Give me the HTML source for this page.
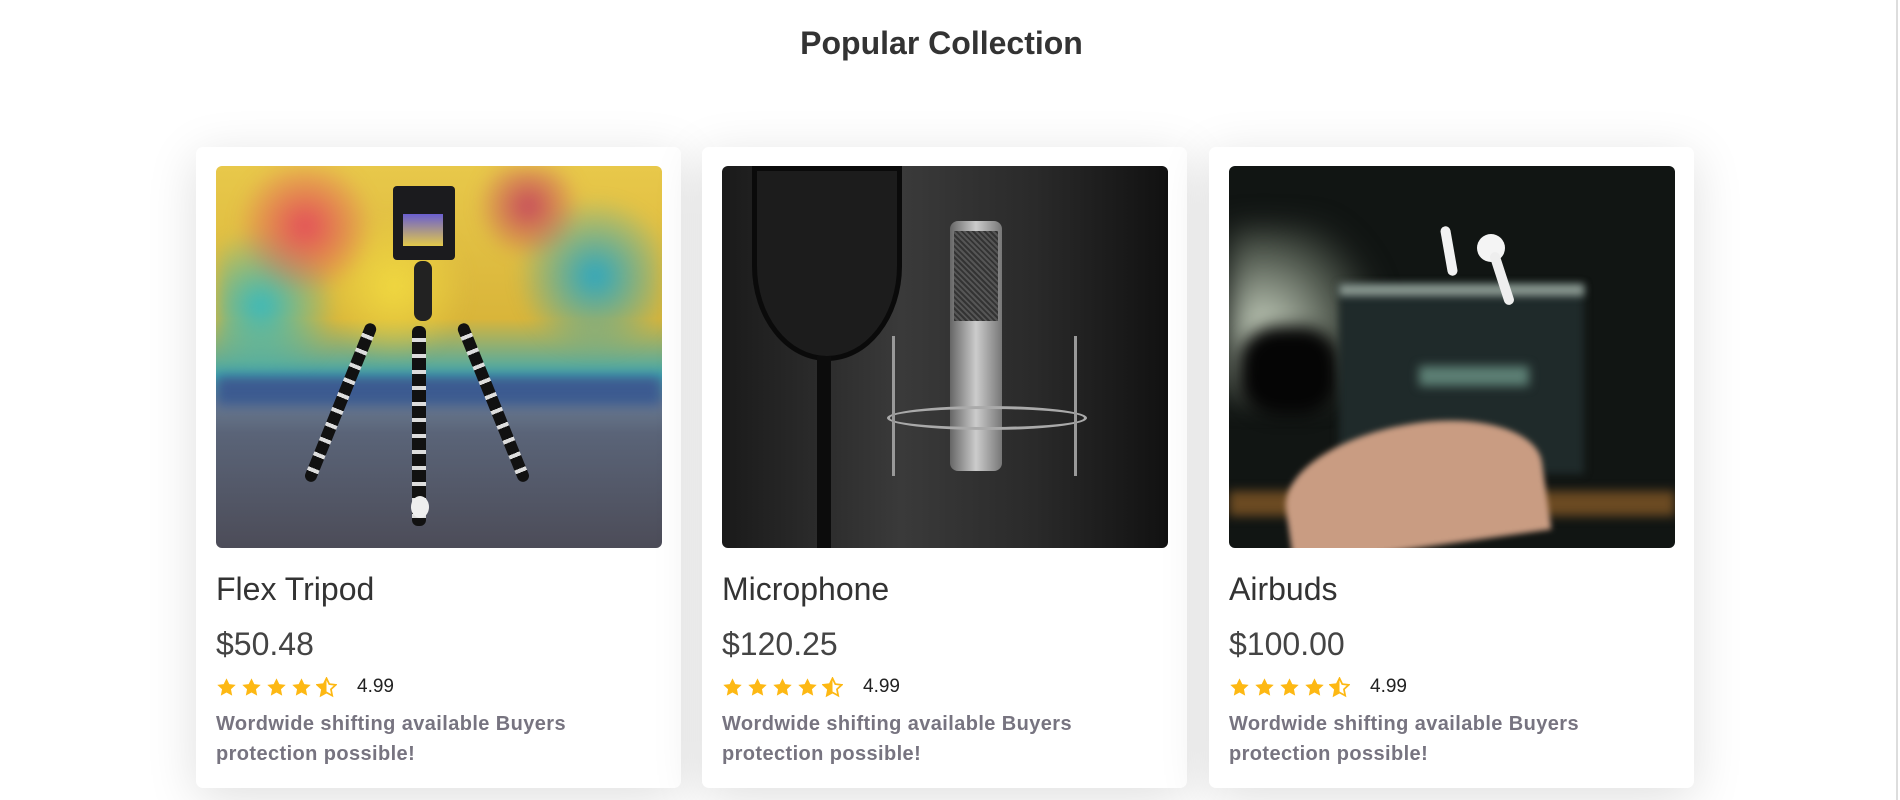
<!DOCTYPE html>
<html><head><meta charset="utf-8"><style>
*{margin:0;padding:0;box-sizing:border-box}
body{width:1900px;height:800px;background:#fff;font-family:"Liberation Sans",sans-serif;overflow:hidden;position:relative}
h1{position:absolute;top:25px;left:0;width:1883px;text-align:center;font-size:32px;font-weight:bold;color:#333;letter-spacing:0px}
.card{position:absolute;top:147px;width:485px;height:641px;background:#fff;border-radius:7px;box-shadow:0 10px 50px rgba(0,0,0,0.13)}
.img{position:absolute;left:20px;top:19px;width:446px;height:382px;border-radius:6px;overflow:hidden}
.name{position:absolute;left:20px;top:424px;font-size:32px;color:#333}
.price{position:absolute;left:20px;top:479px;font-size:32px;color:#444;font-weight:300}
.stars{position:absolute;left:20px;top:529px;display:flex;align-items:center}
.stars svg{margin-right:4px}
.rate{font-size:19px;color:#222;margin-left:16px}
.desc{position:absolute;left:20px;top:562px;font-size:20px;font-weight:bold;color:#777480;line-height:30px;width:400px;letter-spacing:0.4px}
.b{position:absolute;filter:blur(8px)}
.s{position:absolute}
</style></head><body>
<div style="position:absolute;right:2px;top:0;width:2px;height:800px;background:#ddd"></div>
<h1>Popular Collection</h1>

<div class="card" style="left:196px">
 <div class="img" style="background:linear-gradient(#e8c84a 0%,#d9b53a 40%,#3fa9b0 55%,#6a7a90 62%,#5a6478 70%,#4c4c58 100%)">
  <div class="b" style="left:0;top:0;width:446px;height:200px;background:radial-gradient(circle at 20% 30%,#e34d5a 0,transparent 18%),radial-gradient(circle at 70% 20%,#c6475d 0,transparent 15%),radial-gradient(circle at 40% 60%,#f0d840 0,transparent 25%),radial-gradient(circle at 85% 55%,#2aa6c2 0,transparent 20%),radial-gradient(circle at 10% 70%,#35b9c0 0,transparent 18%)"></div>
  <div class="b" style="left:0;top:210px;width:446px;height:30px;background:#3c5a90;filter:blur(6px)"></div>
  <div class="s" style="left:177px;top:20px;width:62px;height:74px;background:#1b1b1e;border-radius:4px"></div>
  <div class="s" style="left:187px;top:48px;width:40px;height:32px;background:linear-gradient(#6a5fd0,#e3c94a)"></div>
  <div class="s" style="left:198px;top:95px;width:18px;height:60px;background:#222;border-radius:8px"></div>
  <div class="s" style="left:196px;top:160px;width:14px;height:200px;background:repeating-linear-gradient(#111 0 12px,#ddd 12px 16px);border-radius:6px"></div>
  <div class="s" style="left:150px;top:160px;width:12px;height:170px;background:repeating-linear-gradient(#111 0 12px,#ddd 12px 16px);border-radius:6px;transform:rotate(22deg);transform-origin:top right"></div>
  <div class="s" style="left:240px;top:160px;width:12px;height:170px;background:repeating-linear-gradient(#111 0 12px,#ddd 12px 16px);border-radius:6px;transform:rotate(-22deg);transform-origin:top left"></div>
  <div class="s" style="left:195px;top:330px;width:18px;height:22px;background:#eee;border-radius:50%"></div>
 </div>
 <div class="name">Flex Tripod</div><div class="price">$50.48</div>
 <div class="stars">STARS</div>
 <div class="desc">Wordwide shifting available Buyers protection possible!</div>
</div>

<div class="card" style="left:702px">
 <div class="img" style="background:linear-gradient(90deg,#1a1a1a,#3a3a3a 40%,#2a2a2a 70%,#111)">
  <div class="s" style="left:30px;top:0;width:150px;height:195px;border-radius:0 0 75px 75px/0 0 95px 95px;background:#1c1c1c;border:5px solid #0a0a0a"></div>
  <div class="s" style="left:95px;top:190px;width:14px;height:192px;background:#0c0c0c"></div>
  <div class="s" style="left:228px;top:55px;width:52px;height:250px;background:linear-gradient(90deg,#666,#ccc,#777);border-radius:8px"></div>
  <div class="s" style="left:232px;top:65px;width:44px;height:90px;background:repeating-linear-gradient(45deg,#333 0 2px,#555 2px 4px)"></div>
  <div class="s" style="left:165px;top:240px;width:200px;height:24px;border:3px solid #aaa;border-radius:50%"></div>
  <div class="s" style="left:170px;top:170px;width:185px;height:140px;border-left:3px solid #999;border-right:3px solid #999"></div>
 </div>
 <div class="name">Microphone</div><div class="price">$120.25</div>
 <div class="stars">STARS</div>
 <div class="desc">Wordwide shifting available Buyers protection possible!</div>
</div>

<div class="card" style="left:1209px">
 <div class="img" style="background:#111513">
  <div class="b" style="left:0;top:60px;width:160px;height:170px;background:radial-gradient(circle at 20% 60%,#c8d2c0,#4a5248 50%,transparent 75%);filter:blur(14px)"></div>
  <div class="b" style="left:10px;top:160px;width:100px;height:90px;background:#050505;border-radius:40%"></div>
  <div class="b" style="left:110px;top:118px;width:245px;height:190px;background:#1f2a2a;filter:blur(4px)"></div>
  <div class="b" style="left:110px;top:118px;width:245px;height:12px;background:#8a9890;filter:blur(4px)"></div>
  <div class="b" style="left:190px;top:200px;width:110px;height:20px;background:#5c7f74;filter:blur(5px)"></div>
  <div class="b" style="left:0;top:325px;width:446px;height:25px;background:#6b4a22;filter:blur(5px)"></div>
  <div class="s" style="left:55px;top:258px;width:260px;height:124px;background:#c99c82;border-radius:60% 50% 0 0;filter:blur(3px);transform:rotate(-8deg)"></div>
  <div class="s" style="left:215px;top:60px;width:10px;height:50px;background:#f2f2f2;border-radius:5px;transform:rotate(-10deg)"></div>
  <div class="s" style="left:248px;top:68px;width:28px;height:28px;background:#f4f4f4;border-radius:50%"></div>
  <div class="s" style="left:268px;top:85px;width:10px;height:55px;background:#eee;border-radius:5px;transform:rotate(-18deg)"></div>
 </div>
 <div class="name">Airbuds</div><div class="price">$100.00</div>
 <div class="stars">STARS</div>
 <div class="desc">Wordwide shifting available Buyers protection possible!</div>
</div>

<script>
var st='<svg width="21" height="21" viewBox="0 0 24 24"><path d="M12 1.5l3.2 6.6 7.3.9-5.4 5 1.4 7.3L12 17.7l-6.5 3.6 1.4-7.3-5.4-5 7.3-.9z" fill="#fdb813"/></svg>';
var half='<svg width="21" height="21" viewBox="0 0 24 24"><path d="M12 1.5l3.2 6.6 7.3.9-5.4 5 1.4 7.3L12 17.7l-6.5 3.6 1.4-7.3-5.4-5 7.3-.9z" fill="none" stroke="#fdb813" stroke-width="2"/><path d="M12 1.5L8.8 8.1l-7.3.9 5.4 5-1.4 7.3L12 17.7z" fill="#fdb813"/></svg>';
document.querySelectorAll('.stars').forEach(function(e){e.innerHTML=st+st+st+st+half+'<span class="rate">4.99</span>';});
</script>
</body></html>
